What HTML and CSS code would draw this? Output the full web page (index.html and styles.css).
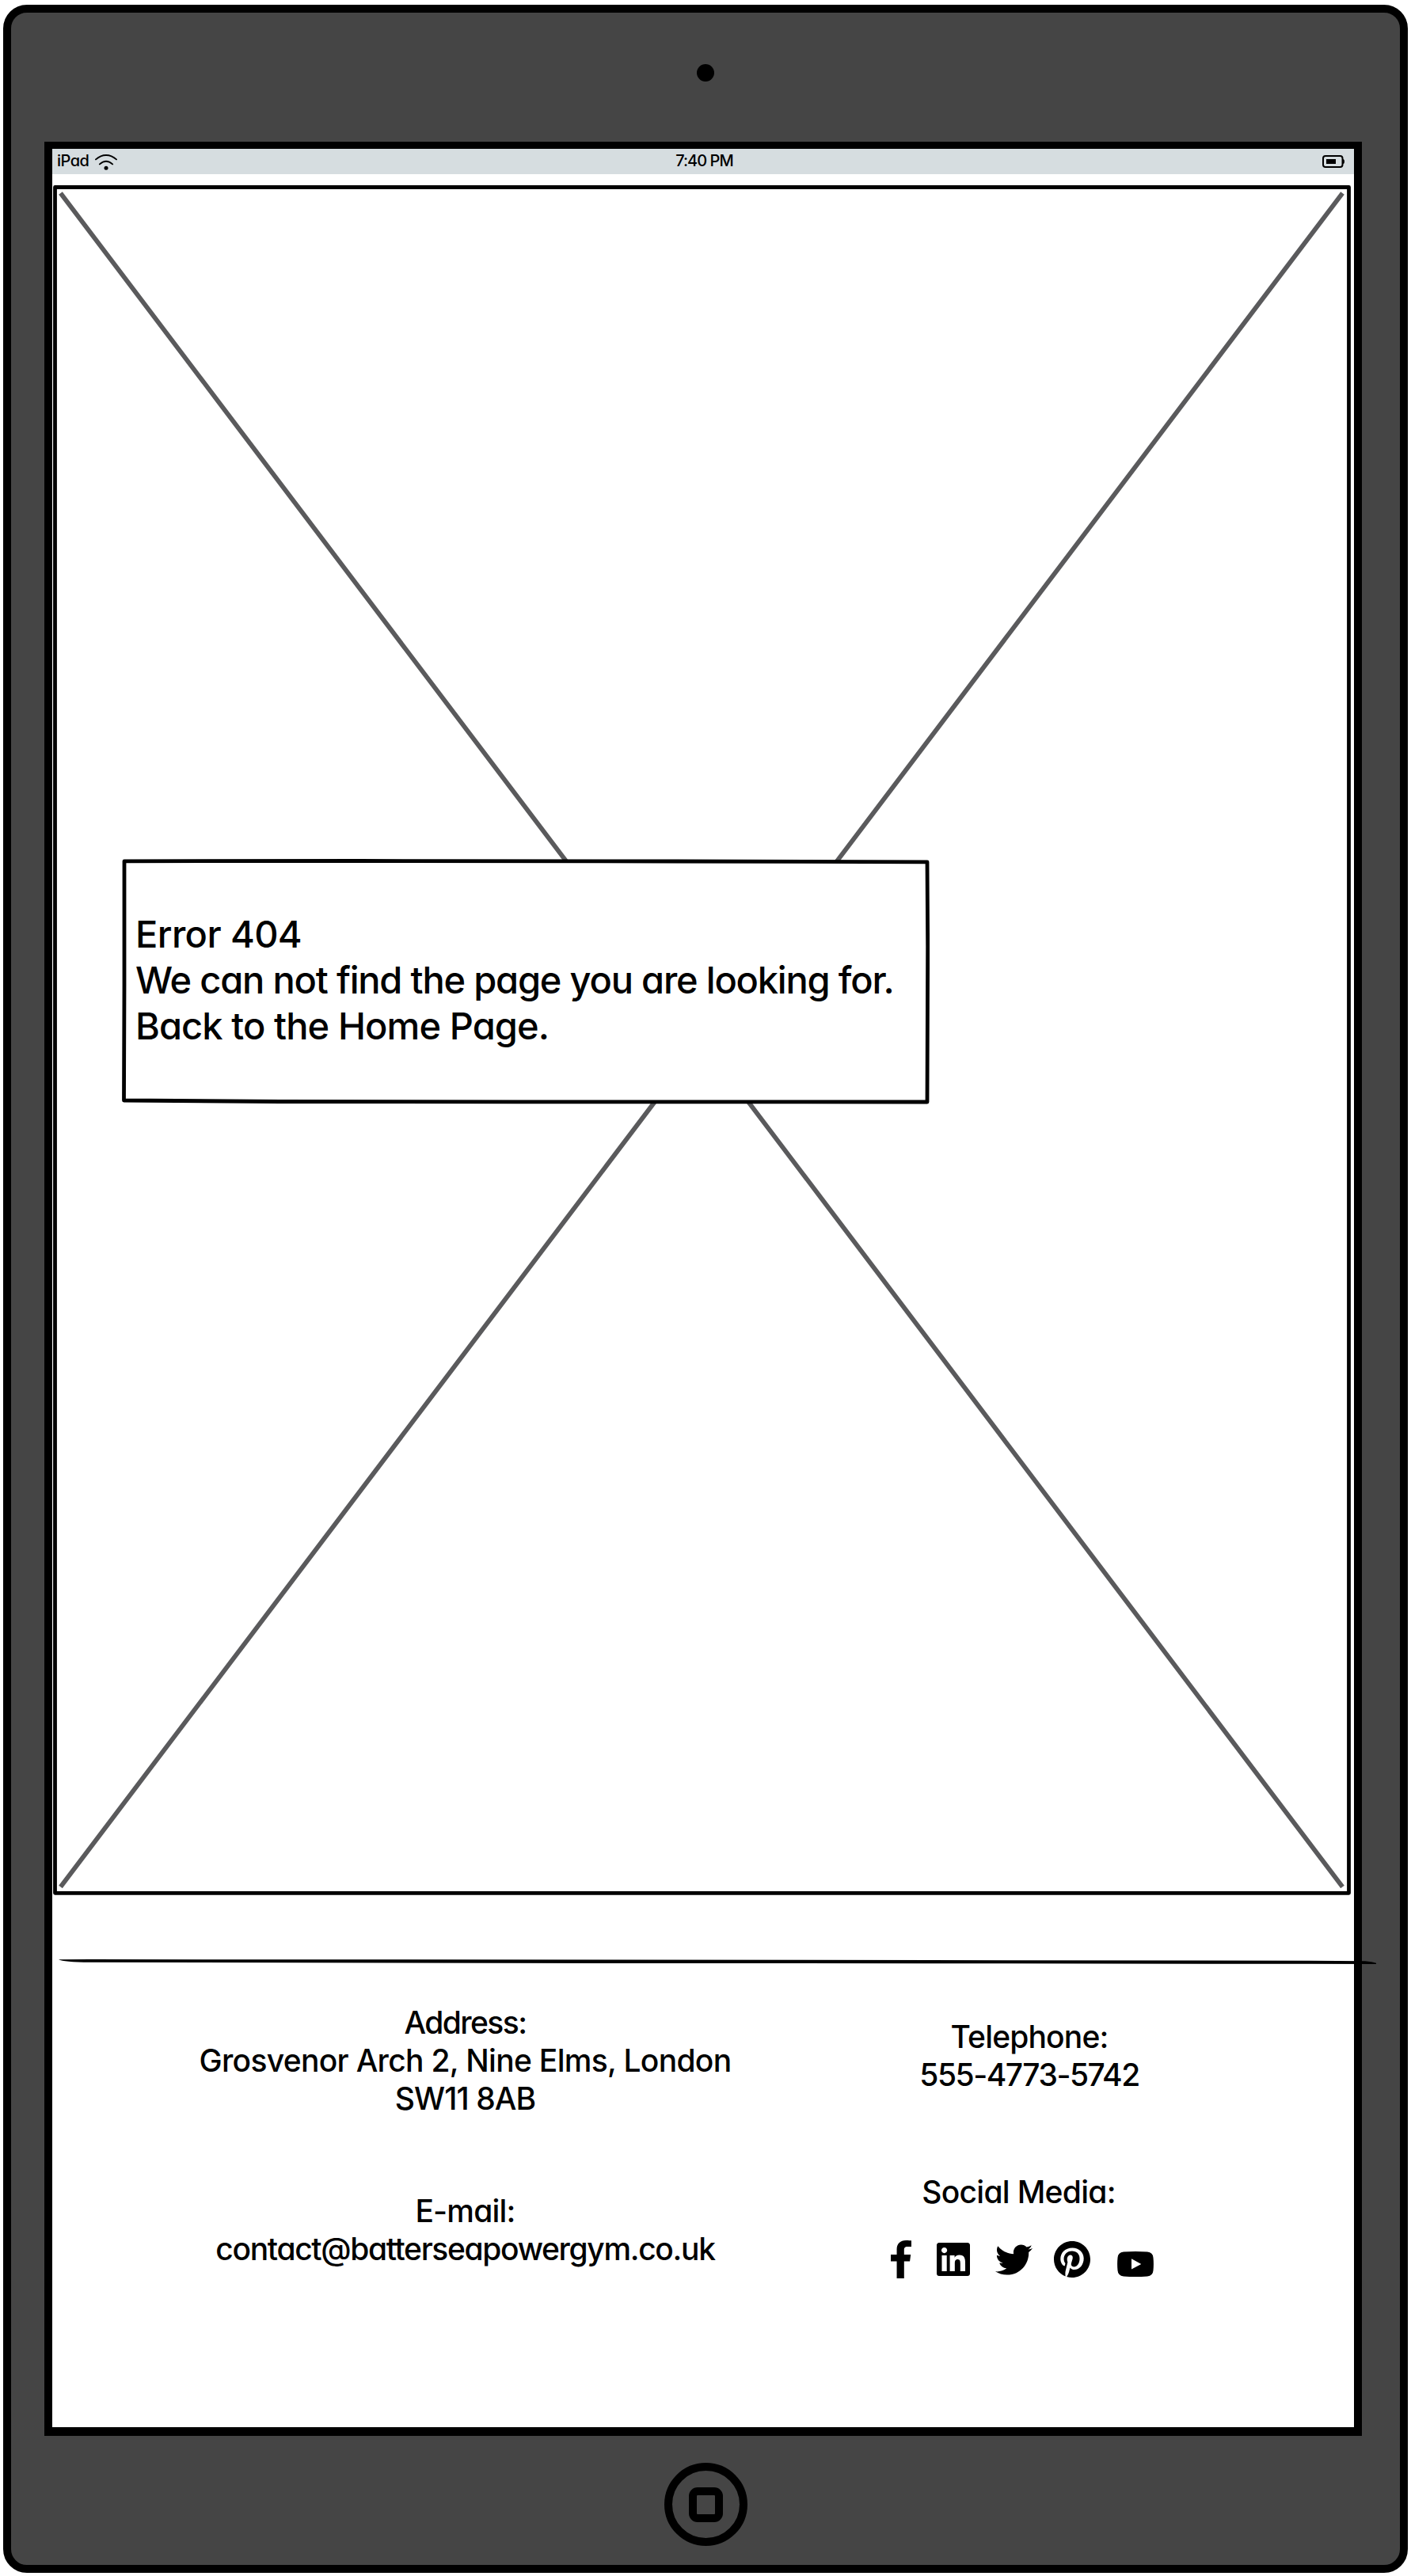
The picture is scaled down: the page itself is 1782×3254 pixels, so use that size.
FILE: index.html
```html
<!DOCTYPE html>
<html lang="en">
<head>
<meta charset="utf-8">
<title>Error 404</title>
<link rel="stylesheet" href="styles.css">
</head>
<body>
<div class="tablet">
  <div class="bezel-top"><span class="camera"></span></div>
  <div class="screen">
    <header class="status">
      <div class="carrier">
        <span class="carrier-name">iPad</span>
        <svg class="wifi" width="28" height="20" viewBox="0 0 28 20">
          <path d="M1 6.4Q7 1 14 1T27 6.4M5.900 12.400Q10 8.800 14 8.800T22.100 12.400" fill="none" stroke="#000" stroke-width="1.900" stroke-linecap="round"/>
          <circle cx="14" cy="17.200" r="2.500"/>
        </svg>
      </div>
      <span class="time">7:40 PM</span>
      <svg class="battery" width="28" height="16" viewBox="0 0 28 16">
        <rect x="1" y="1" width="24.500" height="14" rx="3" fill="none" stroke="#000" stroke-width="2"/>
        <rect x="5" y="5" width="12" height="6"/>
        <path d="M25.500 4.500Q28 5 28 8T25.500 11.500z"/>
      </svg>
    </header>

    <main class="hero">
      <svg class="placeholder" width="1644" height="2160" viewBox="0 0 1644 2160">
        <path d="M10.500 10L1629.500 2149.500M1629.500 10L10.500 2149.500" stroke="#5a5a5c" stroke-width="5.800"/>
        <path d="M3.500 2.500H1637.500V2157.300H3.500z" fill="none" stroke="#000" stroke-width="4.800" stroke-linejoin="round"/>
      </svg>
      <section class="notice">
        <svg class="notice-frame" width="1020" height="310" viewBox="0 0 1020 310">
          <path d="M3 2.800L300 2.500L700 3L1017 3.800L1017.700 110L1017 307L500 306.800L200 306.500L2.500 305L3 160z" fill="#fff" stroke="#000" stroke-width="4.800" stroke-linejoin="round"/>
        </svg>
        <h1 class="line error">Error 404</h1>
        <p class="line message">We can not find the page you are looking for.</p>
        <p class="line back">Back to the Home Page.</p>
      </section>
    </main>

    <svg class="rule" width="1664" height="8" viewBox="0 0 1664 8">
      <path d="M0 .3L40 0L1100 1L1580 1.800L1650 2.200Q1659 3 1664 4.800V6L1580 5.800L1100 5.200L700 5L40 3.800Q6 3.600 0 .3z"/>
    </svg>

    <footer class="footer">
      <div class="column place">
        <div class="block">
          <p class="address">Address:</p>
          <p class="street">Grosvenor Arch 2, Nine Elms, London</p>
          <p class="postcode">SW11 8AB</p>
        </div>
        <div class="block email-block">
          <p class="email">E-mail:</p>
          <p class="email-value">contact@batterseapowergym.co.uk</p>
        </div>
      </div>
      <div class="column reach">
        <div class="block phone-block">
          <p class="phone">Telephone:</p>
          <p class="phone-value">555-4773-5742</p>
        </div>
        <p class="social">Social Media:</p>
        <div class="icons">
          <svg class="facebook" width="26" height="48" viewBox="0 0 264 512" preserveAspectRatio="none"><path d="M76.7 512V283H0v-91h76.7v-71.7C76.7 42.400 124.300 0 193.800 0c33.300 0 61.900 2.500 70.200 3.600V85h-48.200c-37.800 0-45.100 18-45.100 44.300V192H256l-11.700 91h-73.600v229"/></svg>
          <svg class="linkedin" width="42" height="42" viewBox="0 32 448 448"><path d="M416 32H31.900C14.300 32 0 46.500 0 64.300v383.400C0 465.500 14.300 480 31.900 480H416c17.600 0 32-14.500 32-32.300V64.300c0-17.800-14.400-32.300-32-32.300zM135.400 416H69V202.200h66.500V416zm-33.200-243c-21.300 0-38.500-17.300-38.500-38.500S80.900 96 102.200 96c21.200 0 38.500 17.300 38.500 38.500 0 21.300-17.200 38.500-38.500 38.500zm282.100 243h-66.400V312c0-24.800-.5-56.700-34.500-56.700-34.600 0-39.900 27-39.900 54.900V416h-66.400V202.200h63.700v29.200h.9c8.900-16.800 30.600-34.500 62.900-34.500 67.200 0 79.700 44.300 79.700 101.900V416z"/></svg>
          <svg class="twitter" width="47" height="39" viewBox="0 48 512 416"><path d="M459.370 151.716c.325 4.548.325 9.097.325 13.645 0 138.720-105.583 298.558-298.558 298.558-59.452 0-114.680-17.219-161.137-47.106 8.447.974 16.568 1.299 25.340 1.299 49.055 0 94.213-16.568 130.274-44.832-46.132-.975-84.792-31.188-98.112-72.772 6.498.974 12.995 1.624 19.818 1.624 9.421 0 18.843-1.300 27.614-3.573-48.081-9.747-84.143-51.980-84.143-102.985v-1.299c13.969 7.797 30.214 12.670 47.431 13.319-28.264-18.843-46.781-51.005-46.781-87.391 0-19.492 5.197-37.360 14.294-52.954 51.655 63.675 129.300 105.258 216.365 109.807-1.624-7.797-2.599-15.918-2.599-24.040 0-57.828 46.782-104.934 104.934-104.934 30.213 0 57.502 12.670 76.670 33.137 23.715-4.548 46.456-13.320 66.599-25.340-7.798 24.366-24.366 44.833-46.132 57.827 21.117-2.273 41.584-8.122 60.426-16.243-14.292 20.791-32.161 39.308-52.628 54.253z"/></svg>
          <svg class="pinterest" width="46" height="46" viewBox="0 8 496 496"><path d="M496 256c0 137-111 248-248 248-25.600 0-50.200-3.900-73.400-11.100 10.100-16.500 25.200-43.500 30.800-65 3-11.600 15.400-59 15.400-59 8.100 15.400 31.700 28.500 56.800 28.500 74.800 0 128.700-68.800 128.700-154.300 0-81.900-66.900-143.200-152.900-143.200-107 0-163.900 71.800-163.900 150.100 0 36.400 19.400 81.700 50.300 96.100 4.700 2.200 7.200 1.200 8.300-3.300.8-3.400 5-20.300 6.900-28.100.6-2.500.3-4.700-1.700-7.100-10.100-12.500-18.300-35.300-18.300-56.600 0-54.700 41.400-107.600 112-107.600 60.900 0 103.600 41.500 103.600 100.900 0 67.100-33.900 113.600-78 113.600-24.300 0-42.600-20.100-36.700-44.800 7-29.500 20.500-61.300 20.500-82.600 0-19-10.200-34.900-31.400-34.900-24.900 0-44.900 25.700-44.900 60.200 0 22 7.400 36.800 7.400 36.800s-24.500 103.800-29 123.200c-5 21.400-3 51.600-.9 71.200C65.400 450.900 0 361.100 0 256 0 119 111 8 248 8s248 111 248 248z"/></svg>
          <svg class="youtube" width="46" height="32" viewBox="0 0 46 32"><path fill-rule="evenodd" d="M8 .6Q23-.5 38 .6Q45 1.200 45.500 8Q46.300 16 45.500 24Q45 30.800 38 31.400Q23 32.500 8 31.400Q1 30.800.5 24Q-.3 16 .5 8Q1 1.200 8 .6zM18 9.300V22.500L30.300 16z"/></svg>
        </div>
      </div>
    </footer>
  </div>
  <div class="bezel-bottom"><span class="home"><span class="home-mark"></span></span></div>
</div>
</body>
</html>
```
FILE: styles.css
```css
* { box-sizing: border-box; }

body {
  margin: 0;
  background: #fff;
  color: #000;
  font-family: Inter, "Liberation Sans", sans-serif;
  font-weight: 500;
  font-feature-settings: "cv11", "calt" 0;
}

h1, p { margin: 0; font-weight: 500; }
svg { display: block; flex: none; }

.tablet {
  width: 1774px;
  height: 3244px;
  margin: 6px 4px 4px;
  padding: 0 48px 0 42px;
  background: #454545;
  border: 10px solid #000;
  border-radius: 30px;
}

.bezel-top {
  height: 163px;
  display: flex;
  justify-content: center;
  padding: 65px 0 0 6px;
}
.camera { width: 22px; height: 22px; border-radius: 50%; background: #000; }

.screen {
  height: 2898px;
  border: 10px solid #000;
  border-top-width: 9px;
  border-bottom-width: 11px;
  background: #fff;
}

.status {
  height: 32px;
  display: grid;
  grid-template-columns: 1fr auto 1fr;
  align-items: center;
  padding: 0 12px 0 6px;
  background: #d6dde0;
  font-size: 20px;
  line-height: 30px;
}
.carrier { display: flex; align-items: center; gap: 8px; height: 30px; }
.carrier-name { letter-spacing: -.5px; }
.wifi { margin-top: 1px; }
.time { letter-spacing: -.950px; margin-left: 9px; line-height: 28px; height: 30px; }
.carrier-name { line-height: 28px; height: 30px; }
.battery { justify-self: end; }

.hero {
  position: relative;
  height: 2160px;
  margin-top: 14px;
  padding: 851px 0 0 88px;
}
.placeholder { position: absolute; inset: 0; }

.notice {
  position: relative;
  width: 1020px;
  height: 310px;
  padding: 66px 0 0 17px;
  font-size: 47px;
  line-height: 58px;
}
.notice-frame { position: absolute; inset: 0; }
.line { position: relative; font-size: 47px; white-space: nowrap; }
.error { letter-spacing: -.6px; }
.message { letter-spacing: -1.200px; }
.back { letter-spacing: -.9px; }

.rule { margin: 81px 0 0 8px; overflow: visible; }

.footer {
  display: flex;
  padding: 48px 0 0 161px;
  font-size: 39px;
  line-height: 48px;
  text-align: center;
  white-space: nowrap;
}
.column { display: flex; flex-direction: column; }
.place { width: 721px; }
.reach { width: 410px; margin-left: 147px; align-items: center; }
.email-block { margin-top: 94px; }
.address { letter-spacing: -1.600px; }
.street { letter-spacing: -.7px; }
.postcode { letter-spacing: -.9px; }
.email { letter-spacing: -.8px; }
.email-value { letter-spacing: -1.350px; }
.phone-block { margin-top: 18px; }
.phone { letter-spacing: -.840px; }
.phone-value { letter-spacing: -1.500px; }
.social { margin: 100px 27px 0 0; letter-spacing: -.7px; }

.icons {
  display: flex;
  align-items: center;
  height: 48px;
  margin: 37px 19px 0 0;
}
.linkedin { margin-left: 32px; }
.twitter { margin-left: 32px; }
.pinterest { margin-left: 27px; }
.youtube { margin: 12px 0 0 34px; }

.bezel-bottom {
  height: 163px;
  display: flex;
  justify-content: center;
  padding: 34px 0 0 6px;
}
.home {
  display: flex;
  align-items: center;
  justify-content: center;
  width: 105px;
  height: 105px;
  border: 10px solid #000;
  border-radius: 50%;
}
.home-mark {
  width: 43px;
  height: 44px;
  border: 10px solid #000;
  border-radius: 11px;
}
```
